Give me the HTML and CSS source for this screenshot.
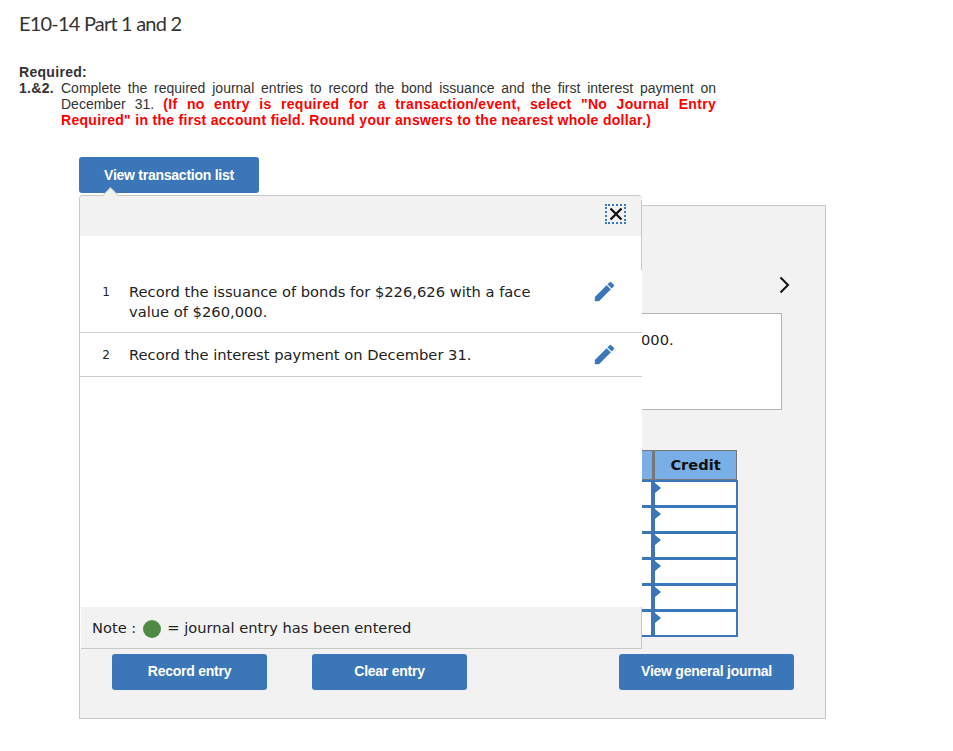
FILE: index.html
```html
<!DOCTYPE html>
<html lang="en">
<head>
  <meta charset="UTF-8" />
  <title>E10-14 Part 1 and 2</title>
  <link rel="stylesheet" href="styles.css">
</head>
<body>
  <h1 class="title">E10-14 Part 1 and 2</h1>

  <div class="required">
    <strong class="required-label">Required:</strong>
    <div class="question">
      <strong class="question-num">1.&amp;2.</strong>
      <p class="question-text">Complete the required journal entries to record the bond issuance and the first interest payment on December 31. <strong class="red">(If no entry is required for a transaction/event, select "No Journal Entry Required" in the first account field. Round your answers to the nearest whole dollar.)</strong></p>
    </div>
  </div>

  <div class="work">
    <button class="btn btn-list">View transaction list</button>

    <div class="panel">
      <div class="panel-nav">
        <svg class="chevron" width="12" height="20" viewBox="0 0 12 20"><polyline points="2.5,2.5 10,10 2.5,17.5" fill="none" stroke="#111" stroke-width="2"/></svg>
      </div>
      <div class="desc">000.</div>
      <div class="journal">
        <div class="journal-head"></div>
        <div class="journal-head credit-head">Credit</div>
        <div class="cell"></div><div class="cell input"></div>
        <div class="cell"></div><div class="cell input"></div>
        <div class="cell"></div><div class="cell input"></div>
        <div class="cell"></div><div class="cell input"></div>
        <div class="cell"></div><div class="cell input"></div>
        <div class="cell"></div><div class="cell input"></div>
      </div>
      <div class="panel-buttons">
        <div class="panel-buttons-left">
          <button class="btn btn-entry">Record entry</button>
          <button class="btn btn-entry">Clear entry</button>
        </div>
        <button class="btn btn-journal">View general journal</button>
      </div>
    </div>

    <div class="popup">
      <div class="popup-notch"></div>
      <div class="popup-head">
        <button class="popup-close">
          <svg width="14" height="14" viewBox="0 0 14 14"><path d="M1.5 1.5l11 11M12.5 1.5l-11 11" stroke="#111" stroke-width="2.3" fill="none"/></svg>
        </button>
      </div>
      <div class="popup-list">
        <div class="row">
          <span class="row-num">1</span>
          <span class="row-text">Record the issuance of bonds for $226,626 with a face value of $260,000.</span>
          <svg class="pencil" width="25" height="25" viewBox="0 0 24 24"><path d="M3 17.25V21h3.75L17.81 9.94l-3.75-3.75L3 17.25zM20.71 7.04a1 1 0 000-1.41l-2.34-2.34a1 1 0 00-1.41 0l-1.83 1.83 3.75 3.75 1.83-1.83z"/></svg>
        </div>
        <div class="row">
          <span class="row-num">2</span>
          <span class="row-text">Record the interest payment on December 31.</span>
          <svg class="pencil" width="25" height="25" viewBox="0 0 24 24"><path d="M3 17.25V21h3.75L17.81 9.94l-3.75-3.75L3 17.25zM20.71 7.04a1 1 0 000-1.41l-2.34-2.34a1 1 0 00-1.41 0l-1.83 1.83 3.75 3.75 1.83-1.83z"/></svg>
        </div>
      </div>
      <div class="popup-note">
        <span>Note :</span>
        <span class="dot"></span>
        <span>= journal entry has been entered</span>
      </div>
    </div>
  </div>
</body>
</html>
```

FILE: styles.css
```css
body {
  margin: 0;
  background: #fff;
  color: #333;
  font-family: "Liberation Sans", Arial, sans-serif;
  font-size: 14px;
}
.title {
  margin: 0;
  padding: 10px 0 0 19px;
  height: 54px;
  font-family: Lato, sans-serif;
  font-size: 20px;
  line-height: 26px;
  font-weight: 400;
  letter-spacing: -0.8px;
  color: #333;
}
.required {
  padding: 0 237px 0 19px;
  line-height: 16px;
}
.required strong {
  letter-spacing: 0.3px;
}
.required-label {
  display: block;
}
.question {
  display: flex;
}
.question-num {
  flex: 0 0 42px;
}
.question-text {
  margin: 0;
  text-align: justify;
}
.red {
  color: #f00;
}

.work {
  position: relative;
  margin: 29px 0 0 79px;
  width: 747px;
}
.btn {
  border: none;
  border-radius: 3px;
  background: #3b76b9;
  color: #fff;
  font-family: "Liberation Sans", Arial, sans-serif;
  font-size: 14px;
  font-weight: bold;
  letter-spacing: -0.25px;
  height: 36px;
  padding: 0 0 2px;
}
.btn-list {
  display: block;
  width: 180px;
  margin-bottom: 12px;
  padding: 0;
}
.panel {
  background: #f2f2f2;
  border: 1px solid #c8c8c8;
  height: 514px;
  box-sizing: border-box;
  padding-right: 43px;
  display: flex;
  flex-direction: column;
}
.panel-nav {
  height: 107px;
  display: flex;
  justify-content: flex-end;
  align-items: flex-end;
}
.chevron {
  margin-bottom: 18px;
  margin-right: -8px;
}
/* left part of this box is covered by the popup */
.desc {
  margin-left: 520px;
  height: 97px;
  box-sizing: border-box;
  background: #fff;
  border: 1px solid #b5b5b5;
  padding: 16px 0 0 40px;
  font-family: "DejaVu Sans", Verdana, sans-serif;
  font-size: 14.65px;
  line-height: 20px;
  color: #222;
}
.journal {
  margin-top: 40px;
  margin-left: auto;
  margin-right: 45px;
  width: 200px;
  display: grid;
  grid-template-columns: 1fr 84px;
  grid-auto-rows: 26px;
}
.journal-head {
  height: 30px;
  background: #7aaee6;
  border: 1px solid #777;
  box-sizing: border-box;
}
.credit-head {
  border-left: 2px solid #777;
  font-family: "DejaVu Sans", Verdana, sans-serif;
  font-size: 14.6px;
  font-weight: bold;
  line-height: 28px;
  text-align: center;
  color: #111;
}
.journal-head + .journal-head ~ .cell {
  position: relative;
  top: 4px;
}
.cell {
  background: #fff;
  border: 2px solid #3b76b9;
  border-left: none;
  box-sizing: border-box;
  margin-bottom: -1px;
}
.input {
  border-left: 2px solid #3b76b9;
  margin-right: -1px;
}
.input::before {
  content: "";
  position: absolute;
  left: 0;
  top: 1px;
  border-left: 6px solid #3b76b9;
  border-top: 5px solid transparent;
  border-bottom: 5px solid transparent;
}
.panel-buttons {
  margin-top: auto;
  margin-bottom: 28px;
  display: flex;
  justify-content: space-between;
  padding-left: 32px;
  margin-right: -12px;
}
.panel-buttons-left {
  display: flex;
  gap: 45px;
}
.btn-entry {
  width: 155px;
}
.btn-journal {
  width: 175px;
}

.popup {
  position: absolute;
  top: 38px;
  left: 0;
  width: 563px;
  height: 454px;
  box-sizing: border-box;
  display: flex;
  flex-direction: column;
  background: #fff;
  border: 1px solid #c8c8c8;
  border-width: 1px 0 0 1px;
  border-radius: 4px 4px 0 0;
}
.popup::after {
  content: "";
  position: absolute;
  top: 4px;
  right: 0;
  width: 1px;
  height: 70px;
  background: #c8c8c8;
}
.popup-notch {
  position: absolute;
  top: -7px;
  left: 24px;
  width: 12px;
  height: 12px;
  background: #f2f2f2;
  border: 1px solid #c8c8c8;
  border-width: 1px 0 0 1px;
  transform: rotate(45deg) scale(0.9);
}
.popup-head {
  height: 40px;
  flex: none;
  background: #f2f2f2;
  border-radius: 4px 4px 0 0;
  display: flex;
  justify-content: flex-end;
  align-items: flex-start;
  padding: 8px 16px 0 0;
  box-sizing: border-box;
}
.popup-close {
  width: 21px;
  height: 20px;
  padding: 0;
  border: 2px dotted #3b76b9;
  background: none;
  display: flex;
  align-items: center;
  justify-content: center;
}
.popup-list {
  flex: 1;
  padding-top: 46px;
}
.row {
  display: flex;
  align-items: flex-start;
  padding-bottom: 10px;
  font-family: "DejaVu Sans", Verdana, sans-serif;
  color: #222;
  font-size: 14.7px;
  line-height: 20px;
}
.row + .row {
  border-top: 1px solid #ccc;
  border-bottom: 1px solid #ccc;
  padding-top: 12px;
  padding-bottom: 9px;
}
.row-num {
  flex: 0 0 49px;
  text-align: right;
  padding-right: 19px;
  box-sizing: border-box;
  font-size: 12px;
}
.row-text {
  width: 420px;
}
.pencil {
  fill: #3b76b9;
  stroke: #3b76b9;
  stroke-width: 0.5;
  margin: -3px 0 0 43px;
  flex: none;
}
.popup-note {
  height: 42px;
  flex: none;
  box-sizing: border-box;
  background: #f2f2f2;
  border-right: 1px solid #c8c8c8;
  border-bottom: 1px solid #c8c8c8;
  margin-left: 1px;
  padding-left: 11px;
  display: flex;
  align-items: center;
  gap: 6px;
  font-family: "DejaVu Sans", Verdana, sans-serif;
  font-size: 14.65px;
  color: #222;
}
.dot {
  width: 18px;
  height: 18px;
  margin: 2px 0 0 1px;
  border-radius: 50%;
  background: #4f8a45;
}
```
